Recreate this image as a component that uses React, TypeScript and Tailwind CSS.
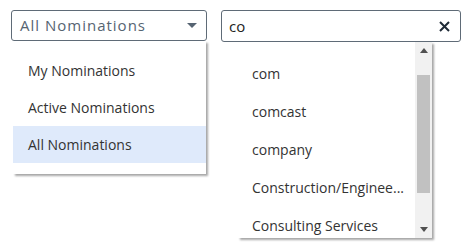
import { useState } from 'react';

const FILTERS = ['My Nominations', 'Active Nominations', 'All Nominations'];
const SUGGESTIONS = ['com', 'comcast', 'company', 'Construction/Enginee...', 'Consulting Services'];

export default function App() {
  const [filter] = useState('All Nominations');
  const [query] = useState('co');

  return (
    <div className="flex h-[243px] w-[469px] items-start gap-[14px] bg-white pl-[11px] pt-[10px] font-['Open_Sans',sans-serif]">
      <div className="flex w-[196px] flex-col">
        <div className="flex h-[31px] items-center justify-between rounded-[3px] border border-[#5f6b77] pl-[8px] pr-[9px]">
          <span className="text-[15px] tracking-[1px] text-[#566472]">{filter}</span>
          <CaretDown />
        </div>
        <ul className="ml-[2px] mr-[1px] py-[11px] shadow-[2px_2px_2px_rgba(0,0,0,0.35)]">
          {FILTERS.map((f) => (
            <li
              key={f}
              className={`flex h-[37px] items-center px-[15px] text-[14px] text-[#333] ${f === filter ? 'bg-[#dfeafb]' : ''}`}
            >
              {f}
            </li>
          ))}
        </ul>
      </div>

      <div className="flex w-[240px] flex-col">
        <div className="flex h-[32px] items-center justify-between rounded-[3px] border border-[#5f6b77] pl-[7px] pr-[10px]">
          <span className="text-[15px] text-[#222]">{query}</span>
          <ClearIcon />
        </div>
        <div className="ml-[17px] mr-[29px] flex h-[196px] shadow-[2px_2px_2px_rgba(0,0,0,0.35)]">
          <ul className="flex-1 overflow-hidden pt-[12px]">
            {SUGGESTIONS.map((s) => (
              <li key={s} className="flex h-[38px] items-center pl-[14px] pr-[8px] text-[14px] text-[#333]">
                <span className="whitespace-nowrap">{s}</span>
              </li>
            ))}
          </ul>
          <div className="flex w-[17px] flex-col items-center bg-[#f1f1f1]">
            <div className="flex h-[17px] items-center justify-center">
              <svg width="8" height="5" viewBox="0 0 8 5" aria-hidden>
                <path d="M0 5 L4 0 L8 5 Z" fill="#505050" />
              </svg>
            </div>
            <div className="mt-[16px] h-[118px] w-[13px] bg-[#c1c1c1]" />
            <div className="flex-1" />
            <div className="flex h-[17px] items-center justify-center">
              <svg width="8" height="5" viewBox="0 0 8 5" aria-hidden>
                <path d="M0 0 L8 0 L4 5 Z" fill="#505050" />
              </svg>
            </div>
          </div>
        </div>
      </div>
    </div>
  );
}

function CaretDown() {
  return (
    <svg width="10" height="5" viewBox="0 0 10 5" aria-hidden>
      <path d="M0 0 L10 0 L5 5 Z" fill="#566472" />
    </svg>
  );
}

function ClearIcon() {
  return (
    <svg width="11" height="11" viewBox="0 0 11 11" aria-hidden>
      <path d="M1 1 L10 10 M10 1 L1 10" stroke="#1f2a36" strokeWidth="2" />
    </svg>
  );
}
